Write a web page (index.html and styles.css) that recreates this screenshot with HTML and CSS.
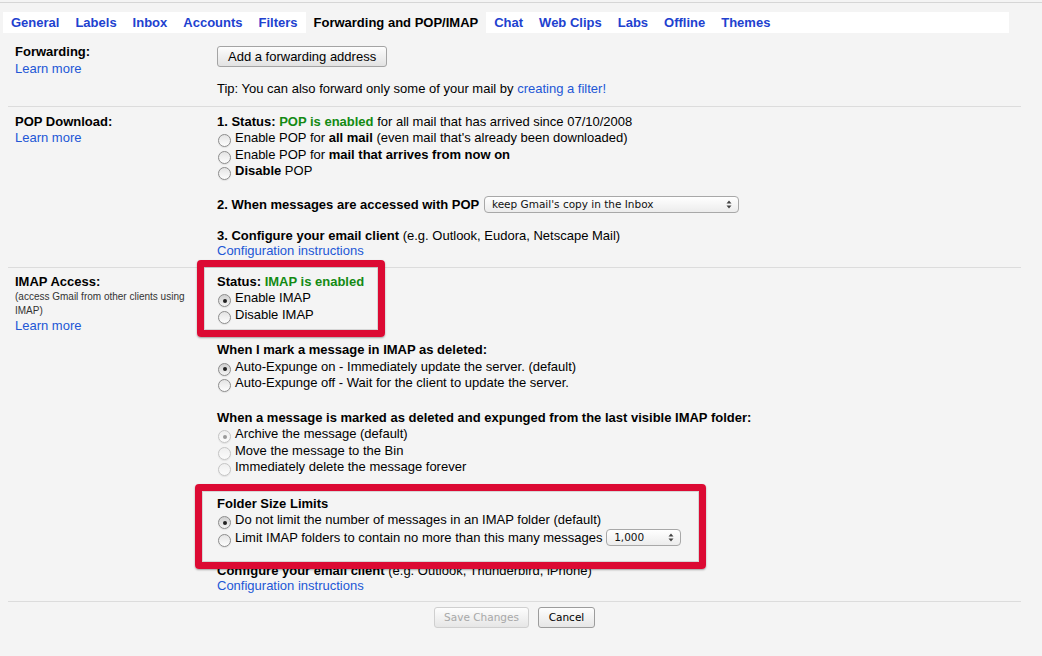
FILE: index.html
```html
<!DOCTYPE html><html><head><meta charset="utf-8">
<title>Settings - Forwarding and POP/IMAP</title>
<link rel="stylesheet" href="styles.css">
</head><body>

<div class="topline"></div>

<div class="tabs">
	<a href="#">General</a>
	<a href="#">Labels</a>
	<a href="#">Inbox</a>
	<a href="#">Accounts</a>
	<a href="#">Filters</a>
	<span class="current">Forwarding and POP/IMAP</span>
	<a href="#">Chat</a>
	<a href="#">Web Clips</a>
	<a href="#">Labs</a>
	<a href="#">Offline</a>
	<a href="#">Themes</a>
</div>

<div class="settings">

<div class="section forwarding">
	<div class="label"><b>Forwarding:</b><a href="#">Learn more</a></div>
	<div class="value">
		<button class="btn">Add a forwarding address</button>
		<div class="tip">Tip: You can also forward only some of your mail by <a href="#">creating a filter!</a></div>
	</div>
</div>

<div class="section pop">
	<div class="label"><b>POP Download:</b><a href="#">Learn more</a></div>
	<div class="value">
		<div class="block">
			<div class="row"><b>1. Status: <span class="on">POP is enabled</span></b> for all mail that has arrived since 07/10/2008</div>
			<div class="row"><span class="radio"></span>Enable POP for <b>all mail</b> (even mail that's already been downloaded)</div>
			<div class="row"><span class="radio"></span>Enable POP for <b>mail that arrives from now on</b></div>
			<div class="row"><span class="radio"></span><b>Disable</b> POP</div>
		</div>
		<div class="block">
			<div class="row"><b>2. When messages are accessed with POP</b> <span class="select wide">keep Gmail's copy in the Inbox<svg width="6" height="9" viewBox="0 0 6 9"><path d="M3 0.5L5.5 3.5H0.5Z M3 8.5L5.5 5.5H0.5Z" fill="#444"/></svg></span></div>
		</div>
		<div class="block last">
			<div class="row"><b>3. Configure your email client</b> (e.g. Outlook, Eudora, Netscape Mail)</div>
			<div class="link-line"><a href="#">Configuration instructions</a></div>
		</div>
	</div>
</div>

<div class="section imap">
	<div class="label">
		<b>IMAP Access:</b>
		<span class="note">(access Gmail from other clients using IMAP)</span>
		<a href="#">Learn more</a>
	</div>
	<div class="value">
		<div class="block status">
			<span class="mark mark-status"></span>
			<div class="row"><b>Status: <span class="on">IMAP is enabled</span></b></div>
			<div class="row"><span class="radio checked"></span>Enable IMAP</div>
			<div class="row"><span class="radio"></span>Disable IMAP</div>
		</div>
		<div class="block expunge">
			<div class="row"><b>When I mark a message in IMAP as deleted:</b></div>
			<div class="row"><span class="radio checked"></span>Auto-Expunge on - Immediately update the server. (default)</div>
			<div class="row"><span class="radio"></span>Auto-Expunge off - Wait for the client to update the server.</div>
		</div>
		<div class="block removal">
			<div class="row"><b>When a message is marked as deleted and expunged from the last visible IMAP folder:</b></div>
			<div class="row"><span class="radio checked disabled"></span>Archive the message (default)</div>
			<div class="row"><span class="radio disabled"></span>Move the message to the Bin</div>
			<div class="row"><span class="radio disabled"></span>Immediately delete the message forever</div>
		</div>
		<div class="block folders">
			<span class="mark mark-folders"></span>
			<div class="row"><b>Folder Size Limits</b></div>
			<div class="row"><span class="radio checked"></span>Do not limit the number of messages in an IMAP folder (default)</div>
			<div class="row tall"><span class="radio"></span>Limit IMAP folders to contain no more than this many messages <span class="select small">1,000<svg width="6" height="9" viewBox="0 0 6 9"><path d="M3 0.5L5.5 3.5H0.5Z M3 8.5L5.5 5.5H0.5Z" fill="#444"/></svg></span></div>
		</div>
		<div class="block last">
			<div class="row"><b>Configure your email client</b> (e.g. Outlook, Thunderbird, iPhone)</div>
			<div class="link-line"><a href="#">Configuration instructions</a></div>
		</div>
	</div>
</div>

</div>

<div class="footer">
	<button class="save" disabled>Save Changes</button>
	<button class="cancel">Cancel</button>
</div>

</body></html>
```

FILE: styles.css
```css
body {
	margin: 0;
	padding-top: 2px;
	background: #f4f4f4;
	color: #000;
	font: 13px/16.5px "Liberation Sans", Arial, sans-serif;
}
a {
	color: #2257d6;
	text-decoration: none;
}
.topline {
	border-top: 1px solid #d6d6d6;
}

/* tabs */
.tabs {
	display: flex;
	height: 21px;
	margin: 9px 33px 0 3px;
	background: #fff;
}
.tabs a, .tabs .current {
	padding: 0 8px;
	font-weight: bold;
	line-height: 21px;
	color: #2141cf;
}
.tabs .current {
	background: #f4f4f4;
	color: #000;
}

/* sections */
.settings {
	margin: 0 21px 0 8px;
}
.section {
	display: grid;
	grid-template-columns: 202px 1fr;
	padding: 7px 0 10px 7px;
	border-bottom: 1px solid #dcdcdc;
}
.section.forwarding {
	padding-top: 11px;
	padding-bottom: 8px;
}
.section.imap {
	padding-top: 6px;
	padding-bottom: 9px;
}
.label b, .label a {
	display: block;
}
.note {
	display: block;
	width: 180px;
	font-size: 10px;
	line-height: 14px;
	color: #333;
}
.forwarding .value {
	padding-top: 2px;
}
.tip {
	margin-top: 14px;
}
.block {
	position: relative;
	margin-bottom: 16px;
}
.imap .block {
	margin-bottom: 19px;
}
.imap .block.expunge {
	margin-bottom: 18px;
}
.imap .block.removal {
	margin-bottom: 20px;
}
.imap .block.folders {
	margin-bottom: 17px;
}
.value .block.last {
	margin-bottom: 0;
}
.row {
	height: 16.5px;
	white-space: nowrap;
}
.row.tall {
	height: 17.5px;
}
.link-line {
	margin-top: -1px;
	line-height: 13px;
}
.on {
	color: #138a13;
}

/* form bits */
.btn {
	height: 21px;
	padding: 0 10px;
	border: 1px solid #a4a4a4;
	border-radius: 3px;
	background: linear-gradient(#fdfdfd, #e2e2e2);
	font: 13px "Liberation Sans", Arial, sans-serif;
	color: #000;
}
.radio {
	display: inline-block;
	box-sizing: border-box;
	width: 13px;
	height: 13px;
	margin: 0 4px 0 1px;
	vertical-align: -5px;
	border: 1px solid #8c8c8c;
	border-radius: 50%;
	background: linear-gradient(#e4e4e4, #fdfdfd);
	box-shadow: 0 1px 1px rgba(0,0,0,.08);
	position: relative;
}
.radio.checked {
	background: linear-gradient(#cfcfcf, #f4f4f4);
}
.radio.checked::after {
	content: "";
	position: absolute;
	left: 3.5px;
	top: 3.5px;
	width: 4px;
	height: 4px;
	border-radius: 50%;
	background: #222;
}
.radio.disabled {
	border-color: #c4c4c4;
	background: linear-gradient(#efefef, #fbfbfb);
}
.radio.disabled.checked::after {
	background: #9a9a9a;
}
.select {
	display: inline-flex;
	align-items: center;
	justify-content: space-between;
	box-sizing: border-box;
	height: 17px;
	padding: 0 6px 0 7px;
	vertical-align: 1px;
	border: 1px solid #a8a8a8;
	border-radius: 4px;
	background: linear-gradient(#ffffff, #ececec);
	font: 10.5px/15px "DejaVu Sans", sans-serif;
	color: #111;
}
.select.wide {
	width: 255px;
	margin-left: 1px;
}
.select.small {
	width: 75px;
}

/* annotation frames */
.mark {
	position: absolute;
	z-index: 2;
	border: 7px solid #dc0a33;
	border-radius: 4px;
	box-shadow: 0 1px 2px rgba(0,0,0,.35), inset 0 0 0 1px rgba(0,0,0,.12);
}
.mark-status {
	left: -20px;
	top: -14px;
	width: 174px;
	height: 63px;
}
.mark-folders {
	left: -22px;
	top: -12px;
	width: 497px;
	height: 71px;
}

/* footer */
.footer {
	display: flex;
	justify-content: center;
	gap: 9px;
	margin: 0 21px 0 8px;
	padding-top: 5px;
}
.footer button {
	height: 21px;
	border: 1px solid #9c9c9c;
	border-radius: 3px;
	background: linear-gradient(#fdfdfd, #e6e6e6);
	font: 10.5px "DejaVu Sans", sans-serif;
	color: #000;
}
.footer .save {
	width: 95px;
	border-color: #cfcfcf;
	color: #a8a8a8;
}
.footer .cancel {
	width: 57px;
}
```
